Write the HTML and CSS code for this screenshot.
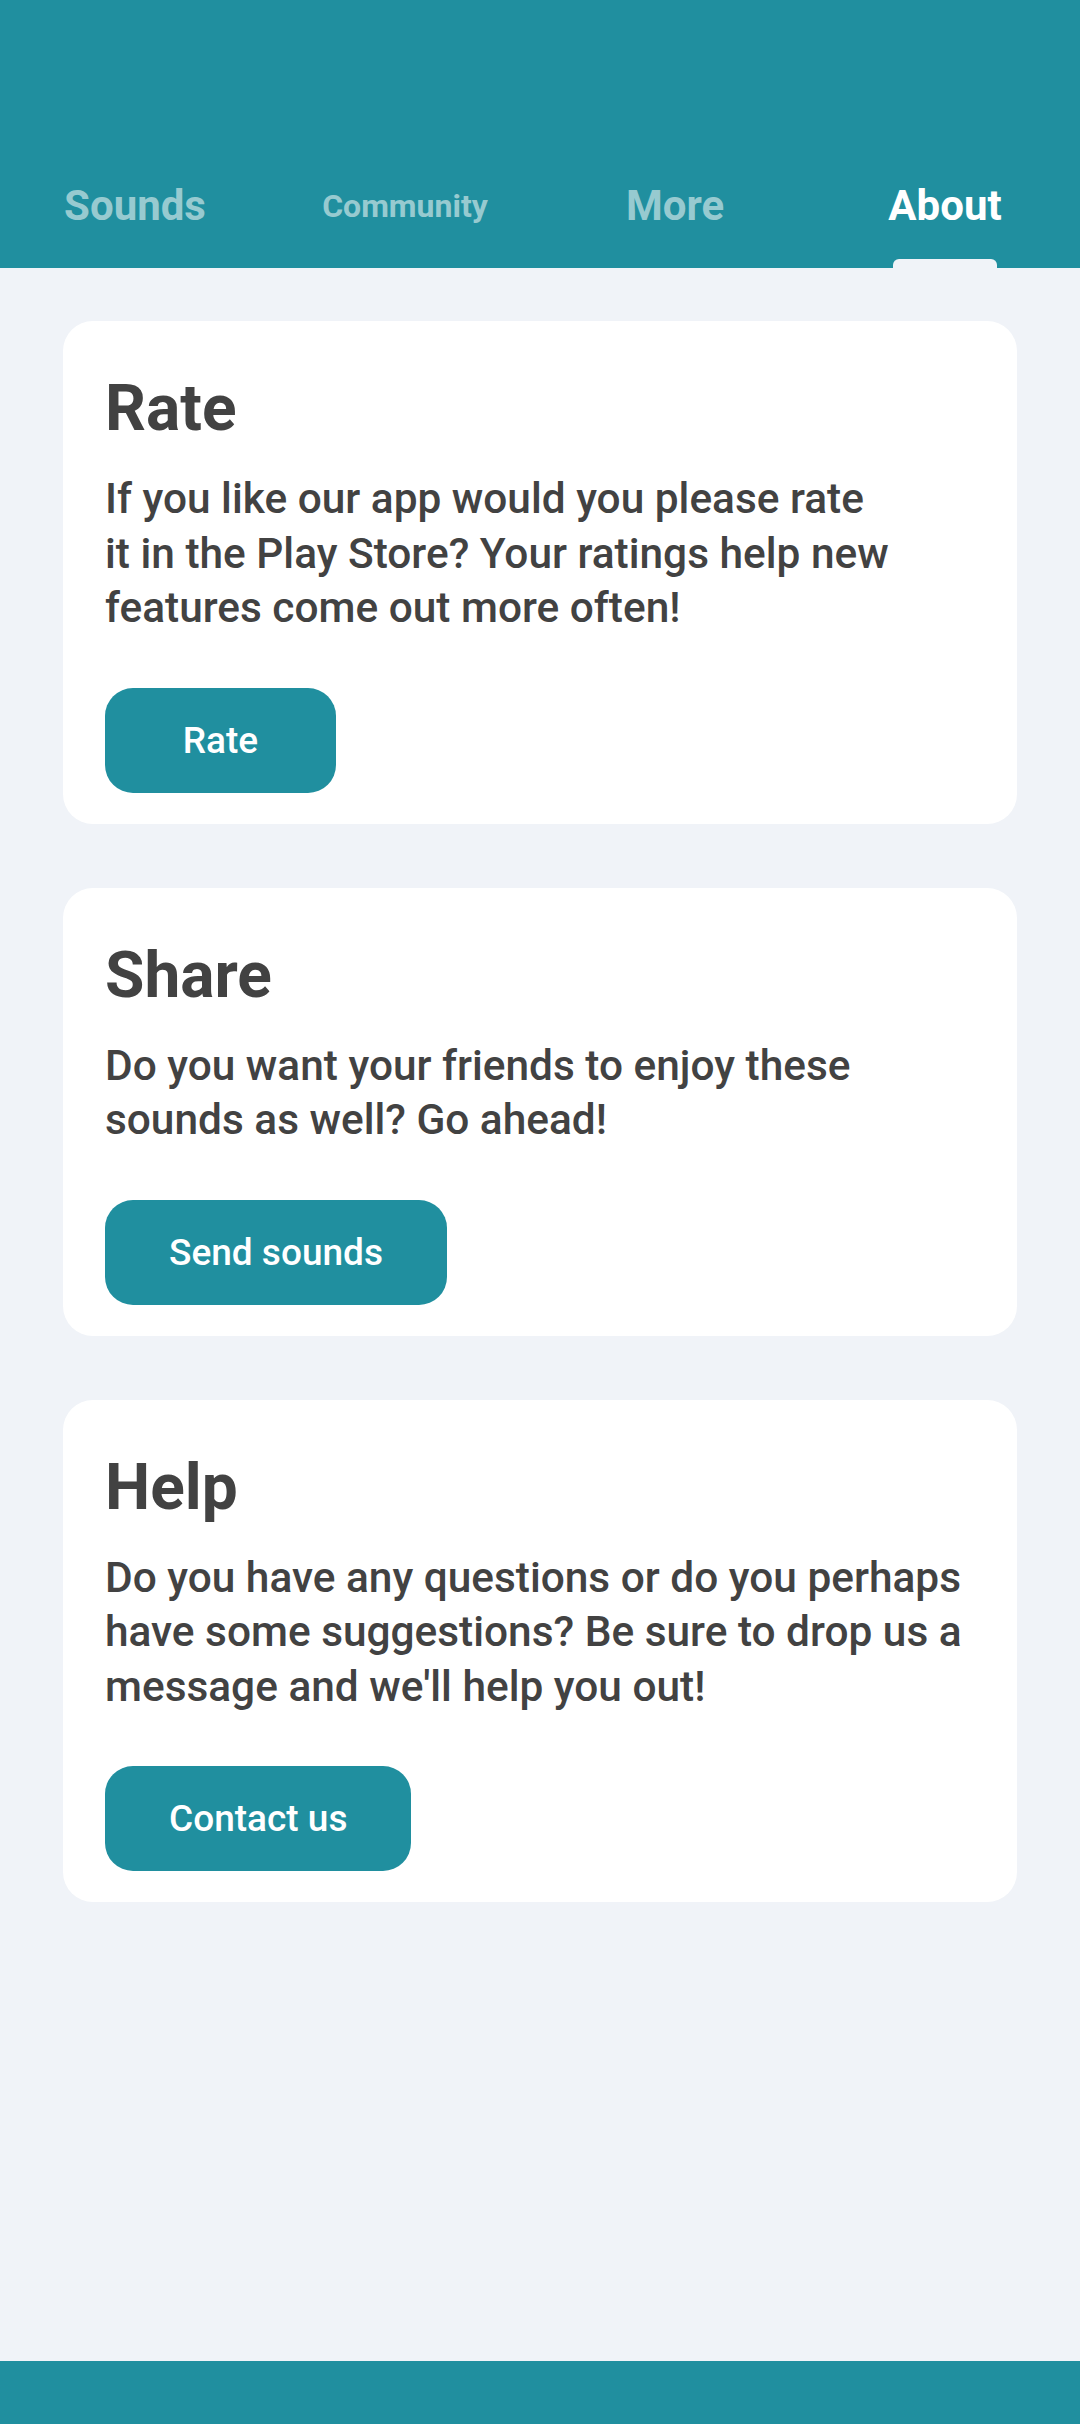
FILE: index.html
```html
<!DOCTYPE html>
<html lang="en">
<head>
<meta charset="utf-8">
<title>About</title>
<link rel="stylesheet" href="styles.css">
</head>
<body>
<div class="app">
  <header class="header">
    <nav class="tabs">
      <div class="tab"><span class="tab-label">Sounds</span><span class="tab-ind"></span></div>
      <div class="tab"><span class="tab-label small">Community</span><span class="tab-ind"></span></div>
      <div class="tab"><span class="tab-label">More</span><span class="tab-ind"></span></div>
      <div class="tab active"><span class="tab-label">About</span><span class="tab-ind"></span></div>
    </nav>
  </header>
  <main class="content">
    <section class="card">
      <h2 class="card-title">Rate</h2>
      <p class="card-text">If you like our app would you please rate<br>it in the Play Store? Your ratings help new features come out more often!</p>
      <button class="btn btn-min">Rate</button>
    </section>
    <section class="card">
      <h2 class="card-title">Share</h2>
      <p class="card-text">Do you want your friends to enjoy these sounds as well? Go ahead!</p>
      <button class="btn">Send sounds</button>
    </section>
    <section class="card">
      <h2 class="card-title">Help</h2>
      <p class="card-text">Do you have any questions or do you perhaps have some suggestions? Be sure to drop us a message and we'll help you out!</p>
      <button class="btn">Contact us</button>
    </section>
  </main>
  <footer class="footer"></footer>
</div>
</body>
</html>
```
FILE: styles.css
```css
* { box-sizing: border-box; }
html, body { margin: 0; padding: 0; }
body {
  font-family: Roboto, "Noto Sans", "Liberation Sans", sans-serif;
  background: #f0f3f8;
  color: #424242;
}
.app {
  display: flex;
  flex-direction: column;
  height: 2424px;
}
.header {
  background: #208f9f;
  height: 268px;
  padding-top: 152px;
  flex: none;
}
.tabs {
  display: grid;
  grid-template-columns: repeat(4, 1fr);
  height: 116px;
}
.tab {
  display: flex;
  flex-direction: column;
  align-items: center;
}
.tab-label {
  flex: 1;
  display: flex;
  align-items: center;
  font-size: 42px;
  line-height: 1;
  font-weight: 700;
  color: #97cad0;
}
.tab-label.small { font-size: 32px; }
.tab.active .tab-label { color: #ffffff; }
.tab-ind {
  width: 104px;
  height: 9px;
  border-radius: 6px 6px 0 0;
  background: transparent;
}
.tab.active .tab-ind { background: #f0f3f8; }
.content {
  flex: 1;
  display: flex;
  flex-direction: column;
  gap: 64px;
  padding: 53px 63px 0 63px;
}
.card {
  background: #ffffff;
  border-radius: 30px;
  padding: 56px 42px 31px 42px;
  display: flex;
  flex-direction: column;
  align-items: flex-start;
}
.card-title {
  margin: 0 0 31px 0;
  font-size: 64px;
  line-height: 1;
  font-weight: 700;
  color: #424242;
}
.card-text {
  margin: 0 0 52px 0;
  font-size: 42.4px;
  line-height: 54.5px;
  font-weight: 500;
  color: #424242;
}
.btn {
  height: 105px;
  padding: 0 64px;
  border: none;
  border-radius: 28px;
  background: #208f9f;
  color: #ffffff;
  font-family: Roboto, "Noto Sans", "Liberation Sans", sans-serif;
  font-size: 37px;
  font-weight: 500;
  display: flex;
  align-items: center;
  justify-content: center;
}
.btn-min { min-width: 231px; }
.footer {
  flex: none;
  height: 63px;
  background: #208f9f;
}
```
